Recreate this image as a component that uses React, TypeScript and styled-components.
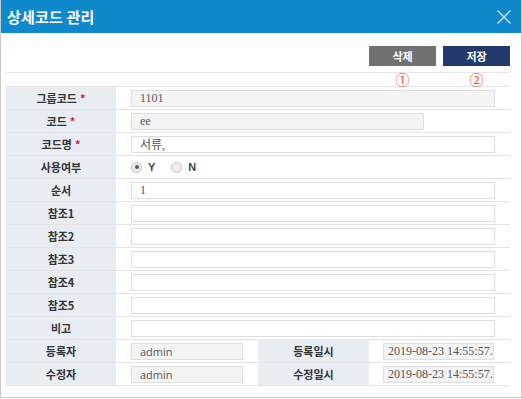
import React from "react";
import styled, { createGlobalStyle } from "styled-components";

const GlobalStyle = createGlobalStyle`
  body {
    margin: 0;
    background: #ffffff;
    font-family: "Noto Sans CJK KR", "Noto Sans", sans-serif;
  }
`;

const Window = styled.div`
  width: 522px;
  height: 398px;
  box-sizing: border-box;
  border: 1px solid #c9c9c9;
  border-top: none;
  background: #ffffff;
`;

const TitleBar = styled.div`
  height: 33px;
  background: #0f88cc;
  display: flex;
  align-items: center;
  justify-content: space-between;
  padding: 0 9px 0 6px;
`;

const Title = styled.h1`
  margin: 0;
  font-size: 15px;
  font-weight: 700;
  color: #ffffff;
  letter-spacing: 0.2px;
`;

const CloseButton = styled.button`
  border: none;
  background: none;
  padding: 0;
  width: 16px;
  height: 16px;
  display: flex;
  cursor: pointer;
`;

const Body = styled.div`
  padding: 13px 11px 0 5px;
`;

const ButtonBar = styled.div`
  display: flex;
  justify-content: flex-end;
  gap: 7px;
  height: 26px;
  border-bottom: 1px solid #e6e6e6;
`;

const ActionButton = styled.button<{ $tone: "gray" | "navy" }>`
  width: 67px;
  height: 20px;
  border: none;
  padding: 0;
  color: #ffffff;
  font-family: "Noto Sans CJK KR", sans-serif;
  font-size: 11px;
  font-weight: 700;
  background: ${(p) => (p.$tone === "gray" ? "#717171" : "#253a6c")};
`;

const MarkerBar = styled.div`
  display: flex;
  justify-content: flex-end;
  gap: 7px;
  height: 13px;
`;

const Marker = styled.span`
  width: 67px;
  text-align: center;
  color: #f0443c;
  font-family: "Noto Sans CJK KR", sans-serif;
  font-size: 14px;
  line-height: 13px;
`;

const Table = styled.div`
  border-top: 1px solid #e3e3e3;
`;

const Row = styled.div<{ $split?: boolean }>`
  display: grid;
  grid-template-columns: ${(p) =>
    p.$split ? "110px 142px 111px 140px" : "110px 1fr"};
  height: 23px;
  border-bottom: 1px solid #e3e3e3;
  box-sizing: border-box;
`;

const Label = styled.div`
  background: #e8edf4;
  display: flex;
  align-items: center;
  justify-content: center;
  font-size: 11px;
  font-weight: 700;
  color: #333333;
`;

const Required = styled.span`
  color: #e0103c;
  margin-left: 3px;
  font-size: 11px;
`;

const Cell = styled.div<{ $padLeft?: number }>`
  display: flex;
  align-items: center;
  padding: 0 15px 0 ${(p) => p.$padLeft ?? 15}px;
`;

const Field = styled.div<{ $readonly?: boolean; $width?: number; $sans?: boolean; $tight?: boolean }>`
  box-sizing: border-box;
  height: 17px;
  width: ${(p) => (p.$width ? `${p.$width}px` : "100%")};
  border: 1px solid #dedede;
  background: ${(p) => (p.$readonly ? "#f4f4f4" : "#ffffff")};
  padding: 0 ${(p) => (p.$tight ? 4 : 8)}px;
  display: flex;
  align-items: center;
  white-space: nowrap;
  overflow: hidden;
  font-family: ${(p) =>
    p.$sans
      ? `"Open Sans", "Noto Sans", sans-serif`
      : `"Liberation Serif", "Noto Sans CJK KR", serif`};
  font-size: ${(p) => (p.$sans ? 11 : 12)}px;
  color: #555555;
`;

const RadioGroup = styled.div`
  display: flex;
  align-items: center;
  gap: 16px;
`;

const RadioOption = styled.label`
  display: flex;
  align-items: center;
  gap: 6px;
  font-family: "Liberation Sans", sans-serif;
  font-size: 11px;
  font-weight: 700;
  color: #444444;
`;

const RadioDot = styled.span<{ $checked?: boolean }>`
  width: 9px;
  height: 9px;
  border-radius: 50%;
  border: 1px solid #c4c4c4;
  background: #eeeeee;
  display: flex;
  align-items: center;
  justify-content: center;
  &::after {
    content: "";
    width: 4px;
    height: 4px;
    border-radius: 50%;
    background: ${(p) => (p.$checked ? "#555555" : "transparent")};
  }
`;

const fields: { label: string; required?: boolean; value?: string; readonly?: boolean; width?: number }[] = [
  { label: "그룹코드", required: true, value: "1101", readonly: true },
  { label: "코드", required: true, value: "ee", readonly: true, width: 293 },
  { label: "코드명", required: true, value: "서류," },
];

const refs = ["참조1", "참조2", "참조3", "참조4", "참조5", "비고"];

const audit = [
  { who: "등록자", whoValue: "admin", when: "등록일시", whenValue: "2019-08-23 14:55:57." },
  { who: "수정자", whoValue: "admin", when: "수정일시", whenValue: "2019-08-23 14:55:57." },
];

export default function App() {
  return (
    <>
      <GlobalStyle />
      <Window>
        <TitleBar>
          <Title>상세코드 관리</Title>
          <CloseButton aria-label="닫기">
            <svg width="16" height="16" viewBox="0 0 16 16">
              <path d="M1.5 1.5 L14.5 14.5 M14.5 1.5 L1.5 14.5" stroke="#cfe6f4" strokeWidth="1.3" fill="none" />
            </svg>
          </CloseButton>
        </TitleBar>
        <Body>
          <ButtonBar>
            <ActionButton $tone="gray">삭제</ActionButton>
            <ActionButton $tone="navy">저장</ActionButton>
          </ButtonBar>
          <MarkerBar>
            <Marker>①</Marker>
            <Marker>②</Marker>
          </MarkerBar>
          <Table>
            {fields.map((f) => (
              <Row key={f.label}>
                <Label>
                  {f.label}
                  {f.required && <Required>*</Required>}
                </Label>
                <Cell>
                  <Field $readonly={f.readonly} $width={f.width}>
                    {f.value}
                  </Field>
                </Cell>
              </Row>
            ))}
            <Row>
              <Label>사용여부</Label>
              <Cell>
                <RadioGroup>
                  <RadioOption>
                    <RadioDot $checked />Y
                  </RadioOption>
                  <RadioOption>
                    <RadioDot />N
                  </RadioOption>
                </RadioGroup>
              </Cell>
            </Row>
            <Row>
              <Label>순서</Label>
              <Cell>
                <Field>1</Field>
              </Cell>
            </Row>
            {refs.map((r) => (
              <Row key={r}>
                <Label>{r}</Label>
                <Cell>
                  <Field />
                </Cell>
              </Row>
            ))}
            {audit.map((a) => (
              <Row key={a.who} $split>
                <Label>{a.who}</Label>
                <Cell>
                  <Field $readonly $sans>{a.whoValue}</Field>
                </Cell>
                <Label>{a.when}</Label>
                <Cell $padLeft={14}>
                  <Field $readonly $tight>{a.whenValue}</Field>
                </Cell>
              </Row>
            ))}
          </Table>
        </Body>
      </Window>
    </>
  );
}
